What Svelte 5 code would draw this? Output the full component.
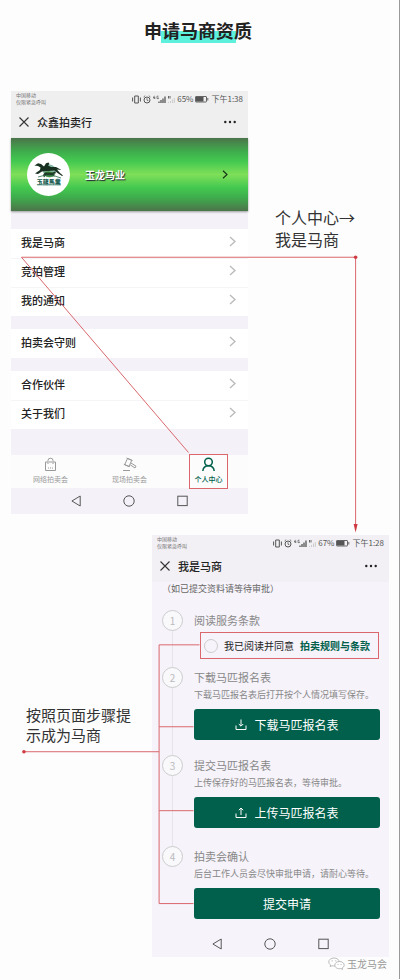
<script>
  const menuGroups = [
    ['我是马商', '竞拍管理', '我的通知'],
    ['拍卖会守则'],
    ['合作伙伴', '关于我们']
  ];

  const tabs = [
    { id: 'online', label: '网络拍卖会' },
    { id: 'live', label: '现场拍卖会' },
    { id: 'me', label: '个人中心' }
  ];

  const steps = [
    { title: '阅读服务条款' },
    {
      title: '下载马匹报名表',
      desc: '下载马匹报名表后打开按个人情况填写保存。',
      button: '下载马匹报名表',
      icon: 'M6 0.5V7M3.8 5L6 7.2L8.2 5M1 6.5V10.5H11V6.5'
    },
    {
      title: '提交马匹报名表',
      desc: '上传保存好的马匹报名表，等待审批。',
      button: '上传马匹报名表',
      icon: 'M6 8V1M3.8 3.2L6 1L8.2 3.2M1 6.5V10.5H11V6.5'
    },
    {
      title: '拍卖会确认',
      desc: '后台工作人员会尽快审批申请，请耐心等待。',
      button: '提交申请'
    }
  ];

  let agreed = $state(false);
  let activeTab = $state('me');
</script>

{#snippet phoneHeader(title, battery, time)}
  <div class="status">
    <div class="carrier">中国移动<br />仅限紧急呼叫</div>
    <div class="indicators">
      <svg width="43" height="9" viewBox="0 0 43 9" fill="none" stroke="#555" aria-hidden="true">
        <path d="M2.7 1H6.3V8H2.7ZM0.6 2.5V6.5M8.4 2.5V6.5" />
        <circle cx="15" cy="5" r="3" />
        <path d="M15 3.2V5.2L16.4 5.8M11.6 2L13.2 0.7M18.4 2L16.8 0.7" stroke-width="0.8" />
        <path d="M22.5 0.8L21.2 3H23.2M22.7 1.8V4M26.5 1.2H25V3.6H26.5V2.6" stroke-width="0.7" />
        <path d="M27 8V6.5M29 8V5M31 8V3.5M33 8V1.5" stroke-width="1.3" />
        <path d="M36.5 1V3.5M38 1V3.5" stroke-width="0.9" />
        <path d="M36.5 8V7M38.5 8V6M40.5 8V4.5M42.3 8V3" stroke="#ccc" />
      </svg>
      <span>{battery}</span>
      <svg width="14" height="8" viewBox="0 0 14 8" aria-hidden="true">
        <rect x="0.5" y="1.5" width="11" height="5.5" rx="0.5" fill="none" stroke="#666" />
        <rect x="1" y="2" width="7.5" height="4.5" fill="#555" />
        <path d="M12.8 3V5.5" stroke="#666" />
      </svg>
      <span>{time}</span>
    </div>
  </div>
  <div class="titlebar">
    <button aria-label="关闭">
      <svg width="10" height="10" viewBox="0 0 10 10" stroke="#333" stroke-width="1.1" aria-hidden="true">
        <path d="M0.5 0.5L9.5 9.5M9.5 0.5L0.5 9.5" />
      </svg>
    </button>
    <h2>{title}</h2>
    <button aria-label="更多">
      <svg width="12" height="4" viewBox="0 0 12 4" fill="#222" aria-hidden="true">
        <circle cx="1.3" cy="2" r="1.2" />
        <circle cx="6" cy="2" r="1.2" />
        <circle cx="10.7" cy="2" r="1.2" />
      </svg>
    </button>
  </div>
{/snippet}

{#snippet systemNav()}
  <div class="sysnav">
    <svg width="10" height="12" viewBox="0 0 10 12"><path d="M9.2 1V11L0.9 6Z" /></svg>
    <svg width="12" height="12" viewBox="0 0 12 12"><circle cx="6" cy="6" r="5.2" /></svg>
    <svg width="11" height="12" viewBox="0 0 11 12"><rect x="0.8" y="1.2" width="9.4" height="9.4" /></svg>
  </div>
{/snippet}

<main>
  <h1><span>申请马商资质</span></h1>

  <section class="first">
    <div class="phone">
      {@render phoneHeader('众鑫拍卖行', '65%', '下午1:38')}

      <button class="banner">
        <svg width="43" height="43" viewBox="0 0 43 43" aria-hidden="true">
          <circle cx="21.5" cy="21.5" r="21.5" fill="#fff" />
          <circle cx="22.5" cy="18" r="6.5" fill="#86b9a8" />
          <path d="M17 20Q22 16 28 21L27 23Q22 25 18 23Z" fill="#3f8f3a" />
          <path
            d="M7.5 12.5L11 10.2L14 11L17 13.5L19 10.2L21.5 9.5L22.5 11L21 12.5L24 14L29 14L34.5 17L30 16.5L33 20L36 22.5L35 23L30.5 20L27.5 17.5L21 18L15 18.5L11 21L8 20.5L13 17L13.5 14.5L11 13Z"
            fill="#18301f"
          />
          <path d="M16 22L18 19.5L25 19.8L28 18.5L29 20L26.5 21L27.5 24L25.8 22.2L19 22L17 24.5Z" fill="#1f3a26" />
          <path d="M11 24Q22 20 34 25" stroke="#2c6d4c" stroke-width="0.8" fill="none" />
          <text x="21.8" y="30.5" text-anchor="middle" font-size="6" font-weight="900" fill="#155a50">玉龍馬業</text>
          <path d="M10 32H34" stroke="#6fa79a" stroke-width="0.8" />
        </svg>
        <span>玉龙马业</span>
        <svg width="6" height="9" viewBox="0 0 6 9" fill="none" stroke="#17351a" stroke-width="1.2" aria-hidden="true">
          <path d="M1 0.8L5 4.5L1 8.2" />
        </svg>
      </button>

      <nav class="menu">
        {#each menuGroups as group}
          <div class="group">
            {#each group as item}
              <button class="row">
                <span>{item}</span>
                <svg width="7" height="11" viewBox="0 0 7 11" fill="none" stroke="#bbb" stroke-width="1.4" aria-hidden="true">
                  <path d="M1 1L6 5.5L1 10" />
                </svg>
              </button>
            {/each}
          </div>
        {/each}
      </nav>

      <nav class="tabs">
        {#each tabs as tab}
          <button class="tab" class:active={activeTab === tab.id} class:marked={tab.id === 'me'} onclick={() => (activeTab = tab.id)}>
            <svg width="15" height="15" viewBox="0 0 15 15" fill="none" stroke="currentColor" aria-hidden="true">
              {#if tab.id === 'online'}
                <path d="M4.5 5H2.5V13.5H12.5V5H10.5M5 7V3.5Q5 1.2 7.5 1.2Q10 1.2 10 3.5V7M6 5H9" />
                <path d="M5 11H10" stroke-dasharray="1 1" />
              {:else if tab.id === 'live'}
                <path d="M5.5 1.5L9.8 3.2L7 9.5L2.6 7.8ZM4.5 1L10.5 3.6M1.8 7.2L7.8 9.8M9 6L14 9.2L13 11L8.2 7.8M1 13.5H8" />
              {:else}
                <circle cx="7.5" cy="5" r="3.8" stroke-width="1.5" />
                <path d="M1.8 14Q2.4 8.7 7.5 8.7Q12.6 8.7 13.2 14" stroke-width="1.5" />
              {/if}
            </svg>
            <span>{tab.label}</span>
          </button>
        {/each}
      </nav>

      {@render systemNav()}
    </div>

    <p class="note">个人中心→<br />我是马商</p>
  </section>

  <section class="second">
    <p class="note small">按照页面步骤提<br />示成为马商</p>

    <div class="phone apply">
      {@render phoneHeader('我是马商', '67%', '下午1:28')}
      <p class="hint">（如已提交资料请等待审批）</p>

      <ol>
        {#each steps as step, i}
          <li>
            <div class="marker"><span>{i + 1}</span></div>
            <div class="content">
              <h3>{step.title}</h3>
              {#if step.desc}
                <p>{step.desc}</p>
                <button class="action">
                  {#if step.icon}
                    <svg width="12" height="12" viewBox="0 0 12 12" fill="none" stroke="#fff" aria-hidden="true">
                      <path d={step.icon} />
                    </svg>
                  {/if}
                  <span>{step.button}</span>
                </button>
              {:else}
                <div class="agree">
                  <input id="agree" type="checkbox" bind:checked={agreed} />
                  <label for="agree">我已阅读并同意</label>
                  <a href="#terms">拍卖规则与条款</a>
                </div>
              {/if}
            </div>
          </li>
        {/each}
      </ol>

      {@render systemNav()}
    </div>
  </section>

  <footer>
    <svg width="17" height="13" viewBox="0 0 17 13" fill="#fff" stroke="#aaa" stroke-width="0.8" aria-hidden="true">
      <path d="M6 1C3 1 0.8 2.7 0.8 5C0.8 6.3 1.5 7.3 2.6 8L2.2 9.6L4 8.7C7.5 9.6 11.2 7.8 11.2 5C11.2 2.7 9 1 6 1Z" />
      <path d="M11.5 4.5C8.8 4.5 6.8 6.1 6.8 8.2C6.8 10.5 9.6 12.3 12.8 11.5L14.5 12.4L14.1 11C15.4 10.3 16.2 9.4 16.2 8.2C16.2 6.1 14.1 4.5 11.5 4.5Z" />
      <path d="M4.2 3.5V4.3M7.8 3.5V4.3M10 7V7.6M13 7V7.6" stroke="#777" />
    </svg>
    <span>玉龙马会</span>
  </footer>

  <!-- Guide lines between the notes and the screens -->
  <svg class="guides" viewBox="0 0 400 980" preserveAspectRatio="none" aria-hidden="true">
    <path d="M189 453L21.5 257.5H356.5V527" />
    <path d="M24 752.5H159.5M200 645.5H159.5V904.5H194M159.5 727.5H194M159.5 811.5H194" />
    <path class="solid" d="M354.5 524.5H358.5L356.5 533Z" />
    <circle class="solid" cx="356.5" cy="257.5" r="1.8" />
    <circle class="solid" cx="24" cy="752.5" r="1.8" />
  </svg>
</main>

<style>
  :global(body) {
    margin: 0;
    background: #fdfdfd;
  }

  main {
    --red: #d9676c;
    --green: #00604b;
    position: relative;
    box-sizing: border-box;
    border-right: 1px solid #999;
    padding: 0 10px 9px 11px;
    background: #fdfdfd;
    color: #333;
    font-family: 'Noto Sans CJK SC', 'Noto Sans', sans-serif;
  }

  h1,
  h2,
  h3,
  p,
  ol {
    margin: 0;
    padding: 0;
  }

  button {
    margin: 0;
    border: 0;
    padding: 0;
    background: none;
    color: inherit;
    font: inherit;
    cursor: pointer;
  }

  svg {
    display: block;
    flex: none;
  }

  h1 {
    padding: 17px 4px 48px 0;
    color: #222;
    font-size: 18px;
    font-weight: 700;
    line-height: 26px;
    text-align: center;
  }

  h1 span {
    display: inline-block;
    background: linear-gradient(#5df0dc, #5df0dc) center bottom / 75px 12px no-repeat;
  }

  section {
    display: grid;
  }

  .first {
    grid-template-columns: 237fr 141fr;
  }

  .second {
    grid-template-columns: 141fr 237fr;
    margin-top: 21px;
  }

  .note {
    padding: 115px 0 0 27px;
    font-size: 16px;
    line-height: 22px;
  }

  .note.small {
    padding: 170px 0 0 15px;
    font-size: 15px;
    line-height: 20px;
  }

  .phone {
    display: flex;
    flex-direction: column;
    min-width: 0;
    background: #f4f2f8;
  }

  .apply {
    background: #f6f3fa;
  }

  .status {
    display: flex;
    justify-content: space-between;
    height: 17px;
    padding: 0 5px;
    background: #efefef;
    color: #555;
  }

  .carrier {
    color: #777;
    font-size: 5px;
    line-height: 7px;
  }

  .indicators {
    display: flex;
    align-items: center;
    gap: 2px;
    height: 16px;
    font-size: 8px;
    line-height: 16px;
    white-space: nowrap;
  }

  .titlebar {
    display: flex;
    align-items: center;
    height: 28px;
    padding: 0 12px 2px 8px;
    background: #efefef;
  }

  .apply .status,
  .apply .titlebar {
    background: #f2f0f4;
  }

  h2 {
    flex: 1;
    margin-left: 8px;
    color: #222;
    font-size: 11px;
    font-weight: 500;
    line-height: 16px;
  }

  .banner {
    display: flex;
    align-items: center;
    height: 73px;
    padding: 0 20px 0 16px;
    background: linear-gradient(#4c744b, #3fab4c 18%, #43c950 32%, #7fdf59 50%, #43c950 68%, #3fab4c 82%, #4c744b);
    box-shadow: 0 1px 2px #9a9a9a;
  }

  .banner span {
    flex: 1;
    margin-left: 15px;
    color: #fff;
    font-size: 10px;
    font-weight: 700;
    text-align: left;
    text-shadow: 1px 1px 1px #223;
  }

  .menu {
    display: flex;
    flex-direction: column;
    gap: 13px;
    padding: 18px 0 26px;
  }

  .group {
    background: #fff;
  }

  .row {
    display: flex;
    align-items: center;
    justify-content: space-between;
    width: 100%;
    height: 29px;
    padding: 0 12px 4px 10px;
    color: #222;
    font-size: 11px;
    font-weight: 500;
  }

  .row + .row {
    box-shadow: inset 0 1px #f5f4f6;
  }

  .tabs {
    display: grid;
    grid-template-columns: repeat(3, 1fr);
    justify-items: center;
    height: 33px;
    background: #fcfcfd;
  }

  .tab {
    display: flex;
    flex-direction: column;
    align-items: center;
    gap: 2px;
    padding-top: 2px;
    color: #999;
    font-size: 7px;
    line-height: 10px;
    white-space: nowrap;
  }

  .tab.active {
    color: var(--green);
    font-weight: 500;
  }

  .marked {
    width: 37px;
    outline: 1px solid var(--red);
  }

  .sysnav {
    display: flex;
    align-items: center;
    justify-content: center;
    gap: 42px;
    height: 26px;
    fill: none;
    stroke: #555;
  }

  .hint {
    padding-left: 10px;
    color: #666;
    font-size: 9px;
    line-height: 14px;
  }

  ol {
    padding: 14px 9px 12px 10px;
    list-style: none;
  }

  li {
    display: flex;
    gap: 11px;
  }

  .marker {
    display: flex;
    flex-direction: column;
    align-items: center;
    width: 21px;
  }

  .marker span {
    box-sizing: border-box;
    width: 21px;
    height: 21px;
    border: 1px solid #ccc;
    border-radius: 50%;
    background: #f9f8fb;
    color: #bbb;
    font-size: 10px;
    line-height: 19px;
    text-align: center;
  }

  li:not(:last-child) .marker::after {
    flex: 1;
    width: 1px;
    background: #e6e3ea;
    content: '';
  }

  .content {
    flex: 1;
    min-width: 0;
    padding-bottom: 15px;
  }

  li:first-child .content {
    padding-bottom: 8px;
  }

  li:nth-child(3) .content {
    padding-bottom: 18px;
  }

  li:last-child .content {
    padding-bottom: 0;
  }

  h3 {
    color: #888;
    font-size: 11px;
    font-weight: 400;
    line-height: 20px;
  }

  .content p {
    margin-bottom: 7px;
    color: #888;
    font-size: 9px;
    line-height: 15px;
    white-space: nowrap;
  }

  .action {
    display: flex;
    align-items: center;
    justify-content: center;
    gap: 7px;
    width: 100%;
    height: 31px;
    border-radius: 3px;
    background: var(--green);
    color: #fff;
    font-size: 12px;
  }

  .agree {
    display: flex;
    align-items: center;
    box-sizing: border-box;
    height: 27px;
    margin: 2px 1px 0 6px;
    border: 1px solid var(--red);
    padding-left: 3px;
    color: #222;
    font-size: 10px;
    white-space: nowrap;
  }

  .agree input {
    width: 14px;
    height: 14px;
    margin: 0 6px 0 0;
    border: 1px solid #ccc;
    border-radius: 50%;
    appearance: none;
  }

  .agree input:checked {
    background: var(--green);
  }

  .agree a {
    margin-left: 6px;
    color: var(--green);
    font-weight: 700;
    text-decoration: none;
  }

  footer {
    display: flex;
    align-items: center;
    justify-content: flex-end;
    gap: 2px;
    padding-right: 2px;
    color: #999;
    font-size: 10px;
    line-height: 12px;
  }

  .guides {
    position: absolute;
    top: 0;
    left: 0;
    width: 100%;
    height: 100%;
    fill: none;
    stroke: var(--red);
    pointer-events: none;
  }

  .guides .solid {
    fill: #cf3b42;
    stroke: none;
  }
</style>
